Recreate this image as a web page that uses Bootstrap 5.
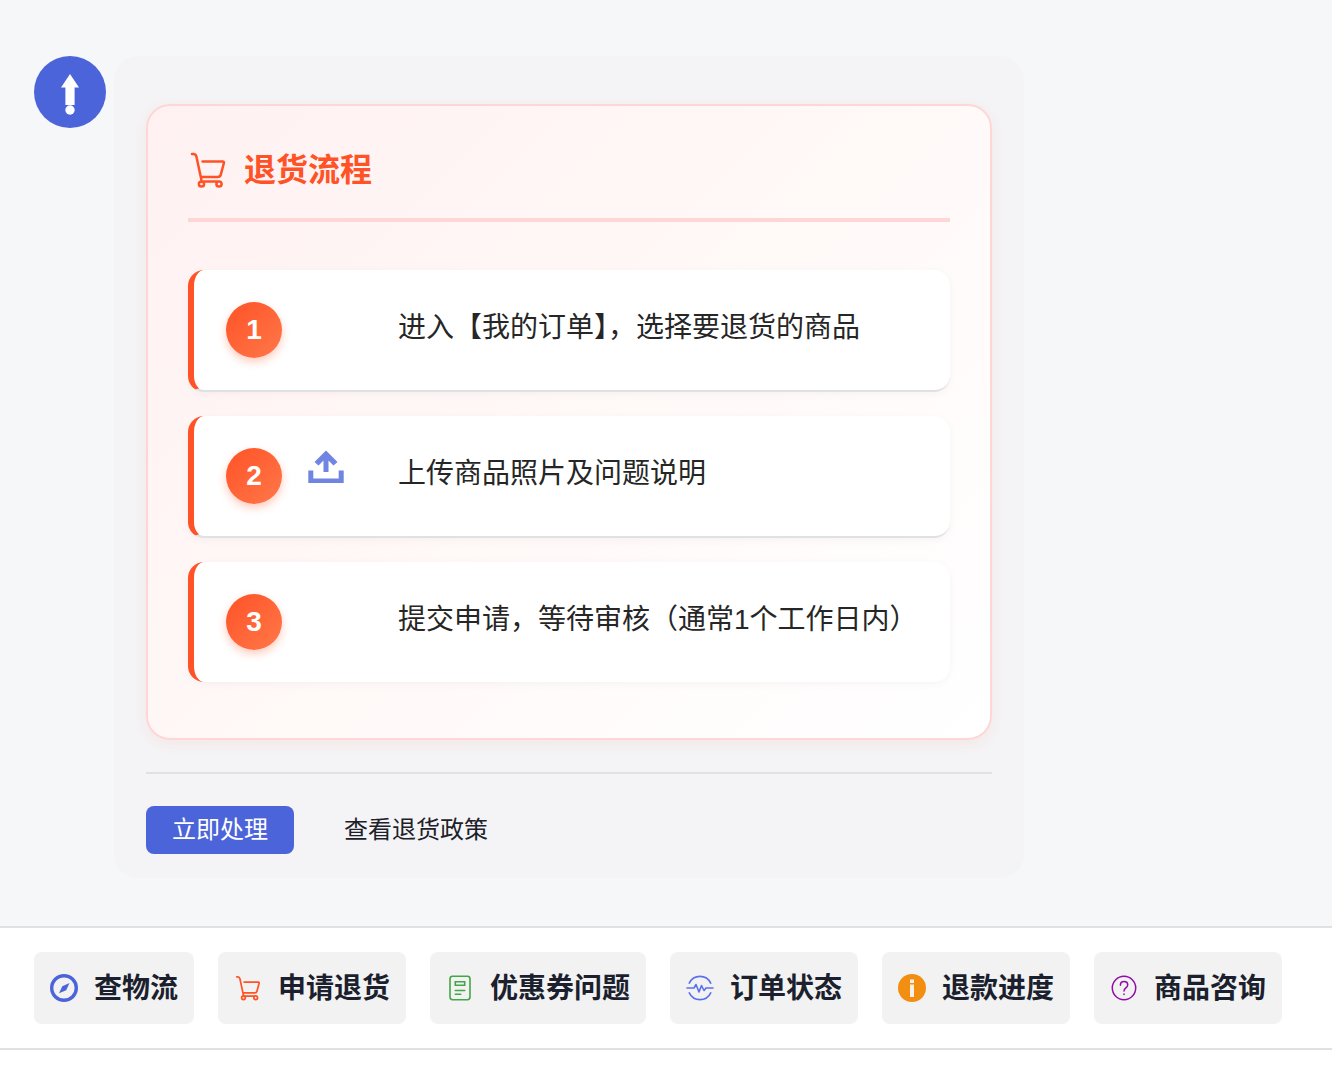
<!DOCTYPE html>
<html lang="zh-CN">
<head>
<meta charset="utf-8">
<meta name="viewport" content="width=device-width, initial-scale=1">
<title>退货流程</title>
<link href="https://cdn.jsdelivr.net/npm/bootstrap@5.3.0/dist/css/bootstrap.min.css" rel="stylesheet">
<style>
  body {
    font-family: "Liberation Sans", "Noto Sans CJK SC", sans-serif;
    background: #fff;
    color: #1d2129;
  }
  .chat-area { background: #f6f7f9; padding: 56px 34px 48px; }
  .avatar { width: 72px; height: 72px; background: #4c64d9; }
  .bubble {
    max-width: 910px;
    background: #f4f4f6;
    border-radius: 24px;
    padding: 48px 32px 24px;
  }
  .flow-card {
    border: 2px solid #ffd6d6;
    border-radius: 24px;
    padding: 40px 40px 56px;
    background: linear-gradient(135deg, #fff1f1 0%, #fffaf9 60%, #fff 100%);
    box-shadow: 0 4px 16px rgba(255, 77, 34, .08);
  }
  .flow-head { color: #ff5226; border-bottom: 4px solid #ffd6d6; gap: 16px; padding-bottom: 24px; margin-bottom: 48px; }
  .flow-title { font-size: 32px; line-height: 48px; font-weight: 700; }
  .steps { gap: 24px; }
  .step {
    background: #fff;
    border-left: 6px solid #ff5226;
    border-bottom: 2px solid #e0e1e3;
    border-radius: 16px;
    padding: 32px;
    box-shadow: 0 2px 8px rgba(0, 0, 0, .04);
  }
  .step:last-child { border-bottom: 0; }
  .step-num {
    width: 56px; height: 56px;
    background: linear-gradient(135deg, #ff5226, #ff7849);
    box-shadow: 0 4px 8px rgba(255, 82, 38, .3);
    font-size: 28px; font-weight: 700;
  }
  .step-icon { width: 40px; margin-left: 24px; margin-right: 52px; }
  .step-text { font-size: 28px; line-height: 52px; color: #262626; }
  .actions { border-top: 2px solid #e0e1e4; margin-top: 32px; padding-top: 32px; gap: 24px; }
  .act { font-size: 24px; line-height: 48px; padding: 0 26px; border: 0; border-radius: 8px; color: #1d2129; }
  .act-main, .act-main:hover { background: #4c64d9; color: #fff; }
  .quick-bar { border-top: 2px solid #e1e1e1; border-bottom: 2px solid #e1e1e1; padding: 24px 34px; gap: 24px; }
  .quick {
    background: #f2f2f2;
    border: 0; border-radius: 8px;
    padding: 2px 16px 0; gap: 16px;
    font-size: 28px; line-height: 70px; font-weight: 700;
    color: #1b1f2e;
  }
  .quick svg { margin-bottom: 2px; }
</style>
<script src="https://cdn.jsdelivr.net/npm/bootstrap@5.3.0/dist/js/bootstrap.bundle.min.js"></script>
</head>
<body>
<svg class="d-none" aria-hidden="true">
  <symbol id="cart" viewBox="0 0 40 40">
    <g fill="none" stroke="currentColor" stroke-width="2.500" stroke-linecap="round" stroke-linejoin="round">
      <path d="M4 4h1.500c2 0 2.600 1 3 3l4.500 21M14.500 11.500h20.300c1 0 1.300.7 1.100 1.500L32.800 24.600c-.4 1.600-1.300 2.400-3 2.400H13l.6 5M16 31.500h13"/>
      <circle cx="13.500" cy="34" r="2.600"/><circle cx="31" cy="34" r="2.600"/>
    </g>
  </symbol>
</svg>

<main class="chat-area d-flex align-items-start gap-2">
  <div class="avatar rounded-circle flex-shrink-0">
    <svg width="72" height="72" viewBox="0 0 72 72" fill="#fff" aria-hidden="true">
      <path d="M36 18l9 13.500h-4.400V49h-9.200V31.500H27z"/><circle cx="36" cy="54" r="4.700"/>
    </svg>
  </div>
  <div class="bubble flex-grow-1">
    <section class="flow-card">
      <header class="flow-head d-flex align-items-center">
        <svg width="40" height="40" aria-hidden="true"><use href="#cart"/></svg>
        <h1 class="flow-title m-0">退货流程</h1>
      </header>
      <ol class="steps list-unstyled d-flex flex-column m-0">
        <li class="step d-flex align-items-start">
          <span class="step-num rounded-circle d-flex align-items-center justify-content-center text-white flex-shrink-0">1</span>
          <span class="step-icon flex-shrink-0"></span>
          <span class="step-text">进入【我的订单】，选择要退货的商品</span>
        </li>
        <li class="step d-flex align-items-start">
          <span class="step-num rounded-circle d-flex align-items-center justify-content-center text-white flex-shrink-0">2</span>
          <span class="step-icon flex-shrink-0">
            <svg class="d-block" width="40" height="40" viewBox="0 0 40 40" fill="#7084e2" aria-hidden="true">
              <path d="M20 2.500L31.500 14l-4 3.600-5-5V24h-5V12.600l-5 5-4-3.600zM2.300 22.500h5v8h25.400v-8h5v12.500H2.300z"/>
            </svg>
          </span>
          <span class="step-text">上传商品照片及问题说明</span>
        </li>
        <li class="step d-flex align-items-start">
          <span class="step-num rounded-circle d-flex align-items-center justify-content-center text-white flex-shrink-0">3</span>
          <span class="step-icon flex-shrink-0"></span>
          <span class="step-text">提交申请，等待审核（通常1个工作日内）</span>
        </li>
      </ol>
    </section>
    <div class="actions d-flex flex-wrap">
      <button type="button" class="btn act act-main">立即处理</button>
      <button type="button" class="btn act">查看退货政策</button>
    </div>
  </div>
</main>

<nav class="quick-bar d-flex flex-wrap bg-white" aria-label="快捷问题">
  <button type="button" class="btn quick d-flex align-items-center">
    <svg width="28" height="28" viewBox="0 0 28 28" aria-hidden="true"><circle cx="14" cy="14" r="12.300" fill="none" stroke="#4c64d9" stroke-width="3.400"/><path d="M19.500 9l-3.300 7.200L9 19.200l3.300-7z" fill="#4c64d9"/></svg>
    <span>查物流</span>
  </button>
  <button type="button" class="btn quick d-flex align-items-center">
    <svg width="28" height="28" color="#ff5226" aria-hidden="true"><use href="#cart"/></svg>
    <span>申请退货</span>
  </button>
  <button type="button" class="btn quick d-flex align-items-center">
    <svg width="28" height="28" viewBox="0 0 28 28" fill="none" stroke="#43a647" stroke-width="1.600" stroke-linecap="round" aria-hidden="true"><rect x="4" y="2.300" width="20" height="23.400" rx="2.600"/><path d="M9.300 7.800h9.400v3.500H9.300zM9.300 16.500h9.400M9.300 20.300h5.400"/></svg>
    <span>优惠券问题</span>
  </button>
  <button type="button" class="btn quick d-flex align-items-center">
    <svg width="28" height="28" viewBox="0 0 28 28" fill="none" stroke="#5b70ec" stroke-width="1.600" stroke-linecap="round" stroke-linejoin="round" aria-hidden="true"><path d="M3.300 9.200a11.800 11.800 0 0 1 21.400 0M3.300 18.800a11.800 11.800 0 0 0 21.400 0M1 14h7l2-3.500 3 7.500 2.500-6.500 2.500 5 2-2.500h7"/></svg>
    <span>订单状态</span>
  </button>
  <button type="button" class="btn quick d-flex align-items-center">
    <svg width="28" height="28" viewBox="0 0 28 28" aria-hidden="true"><circle cx="14" cy="14" r="14" fill="#f28e12"/><path d="M12 5.500h4V9h-4zM12 10.500h4V23h-4z" fill="#f7f1e8"/></svg>
    <span>退款进度</span>
  </button>
  <button type="button" class="btn quick d-flex align-items-center">
    <svg width="28" height="28" viewBox="0 0 28 28" fill="none" stroke="#8e0fa3" stroke-width="1.500" stroke-linecap="round" aria-hidden="true"><circle cx="14" cy="14" r="11.700"/><path d="M10.400 11.200c0-2.200 1.500-3.700 3.700-3.700s3.600 1.500 3.600 3.400c0 3-3.700 3-3.700 6.100M14 20v.5"/></svg>
    <span>商品咨询</span>
  </button>
</nav>
</body>
</html>
